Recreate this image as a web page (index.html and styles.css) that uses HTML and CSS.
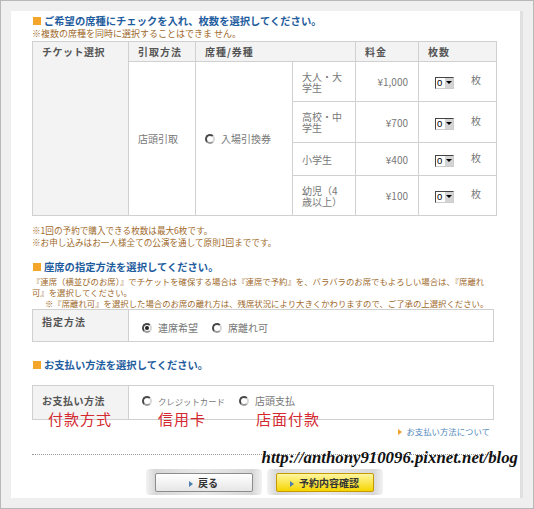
FILE: index.html
```html
<!DOCTYPE html>
<html lang="ja">
<head>
    <meta charset="UTF-8">
    <title>チケット選択</title>
    <link rel="stylesheet" href="styles.css">
</head>
<body>

<div class="frame">
    <div class="panel">

        <h2 class="sec-title"><span class="sq"></span>ご希望の席種にチェックを入れ、枚数を選択してください。</h2>
        <p class="note">※複数の席種を同時に選択することはできま せん。</p>

        <table class="tbl tickets">
            <colgroup>
                <col style="width:96px"><col style="width:67px"><col style="width:97px">
                <col style="width:63px"><col style="width:63px"><col style="width:78px">
            </colgroup>
            <tr class="head">
                <th class="label" rowspan="5">チケット選択</th>
                <th>引取方法</th>
                <th colspan="2">席種/券種</th>
                <th>料金</th>
                <th>枚数</th>
            </tr>
            <tr class="r1">
                <td rowspan="4">店頭引取</td>
                <td rowspan="4"><span class="radio"></span>入場引換券</td>
                <td class="kind">大人・大学生</td>
                <td class="price">¥1,000</td>
                <td class="qty"><span class="sel"><span class="val">0</span><span class="arrow"></span></span>枚</td>
            </tr>
            <tr class="r2">
                <td class="kind">高校・中学生</td>
                <td class="price">¥700</td>
                <td class="qty"><span class="sel"><span class="val">0</span><span class="arrow"></span></span>枚</td>
            </tr>
            <tr class="r3">
                <td class="kind">小学生</td>
                <td class="price">¥400</td>
                <td class="qty"><span class="sel"><span class="val">0</span><span class="arrow"></span></span>枚</td>
            </tr>
            <tr class="r4">
                <td class="kind">幼児（4歳以上）</td>
                <td class="price">¥100</td>
                <td class="qty"><span class="sel"><span class="val">0</span><span class="arrow"></span></span>枚</td>
            </tr>
        </table>

        <div class="note after">
            <p>※1回の予約で購入できる枚数は最大6枚です。</p>
            <p>※お申し込みはお一人様全ての公演を通して原則1回までです。</p>
        </div>

        <h2 class="sec-title sec2"><span class="sq"></span>座席の指定方法を選択してください。</h2>
        <p class="note small">『連席（横並びのお席）』でチケットを確保する場合は『連席で予約』を、バラバラのお席でもよろしい場合は、『席離れ<br>可』を選択してください。<br><span class="indent">※『席離れ可』を選択した場合のお席の離れ方は、残席状況により大きくかわりますので、ご了承の上選択ください。</span></p>

        <table class="tbl opt seat">
            <tr>
                <th class="label">指定方法</th>
                <td><span class="radio on"></span>連席希望<span class="radio gap"></span>席離れ可</td>
            </tr>
        </table>

        <h2 class="sec-title sec3"><span class="sq"></span>お支払い方法を選択してください。</h2>

        <div class="pay-wrap">
            <table class="tbl opt pay">
                <tr>
                    <th class="label">お支払い方法</th>
                    <td><span class="radio"></span><span class="narrow">クレジットカード</span><span class="radio gap"></span>店頭支払</td>
                </tr>
            </table>
            <span class="memo m1">付款方式</span>
            <span class="memo m2">信用卡</span>
            <span class="memo m3">店面付款</span>
        </div>

        <div class="pay-link"><span class="tri"></span>お支払い方法について</div>

        <div class="divider">
            <span class="watermark">http://anthony910096.pixnet.net/blog</span>
        </div>

        <div class="actions">
            <div class="btn-bg"><button class="btn back"><span class="tri blue"></span>戻る</button></div>
            <div class="btn-bg"><button class="btn next"><span class="tri blue"></span>予約内容確認</button></div>
        </div>

    </div>
</div>

</body>
</html>
```

FILE: styles.css
```css
body {
    margin: 0;
    font-family: "Noto Sans CJK JP", "Liberation Sans", sans-serif;
}
.frame {
    box-sizing: border-box;
    width: 534px;
    height: 509px;
    border: 1px solid #b8b8b8;
    background: #efefef;
    padding: 10px;
}
.panel {
    box-sizing: border-box;
    height: 487px;
    width: 512px;
    background: #fff;
    border-right: 3px solid #e0e0e0;
    padding: 3px 24px 0 21px;
}

.sec-title {
    margin: 0;
    height: 14px;
    line-height: 14px;
    font-size: 10.3px;
    font-weight: bold;
    color: #1f5d9e;
    display: flex;
    align-items: center;
}
.sq {
    width: 8px;
    height: 8px;
    background: #f4a52a;
    margin: 0 3px 0 1px;
}
.sec2 { margin-top: 13px; }
.sec3 { margin-top: 16px; }

.note {
    margin: 0;
    font-size: 9px;
    line-height: 11px;
    color: #a06a2c;
    white-space: nowrap;
}
.note p {
    margin: 0;
    font-size: 8.6px;
    height: 12px;
    line-height: 12px;
}
.note.after { margin-top: 8px; height: 23px; }
.note.small {
    margin-top: 2px;
    font-size: 8.4px;
}
.indent { padding-left: 13px; }

.tbl {
    border-collapse: collapse;
    table-layout: fixed;
    font-size: 10px;
    color: #777;
}
.tbl th, .tbl td {
    border: 1px solid #d0d0d0;
    padding: 0 9px;
    text-align: left;
    font-weight: normal;
}
.tbl th {
    background: #f3f3f3;
    color: #555;
    font-weight: bold;
    letter-spacing: 1px;
}
.tickets {
    width: 464px;
    margin-top: 2px;
}
.tickets .head { height: 20px; }
.tickets th.label { vertical-align: top; padding-top: 2px; letter-spacing: 0.5px; }
.tickets .r1 { height: 40px; }
.tickets .r2 { height: 41px; }
.tickets .r3 { height: 33px; }
.tickets .r4 { height: 40px; }
.tickets td { line-height: 11px; }
.tickets .price { text-align: right; padding-right: 10px; }
.tickets .qty { padding-left: 16px; }

.radio {
    display: inline-block;
    box-sizing: border-box;
    width: 10px;
    height: 10px;
    border-radius: 50%;
    border: 2px solid #4a4a4a;
    border-right-color: #d8d8d8;
    border-bottom-color: #9a9a9a;
    background: #fff;
    vertical-align: -1px;
    margin-right: 6px;
    position: relative;
}
.radio.on::after {
    content: "";
    position: absolute;
    left: 1px;
    top: 1px;
    width: 4px;
    height: 4px;
    border-radius: 50%;
    background: #222;
}
.radio.gap { margin-left: 14px; }

.sel {
    display: inline-flex;
    align-items: stretch;
    box-sizing: border-box;
    width: 19px;
    height: 12px;
    border: 1px solid #444;
    border-right-color: #ccc;
    border-bottom-color: #ccc;
    background: #fff;
    vertical-align: -2px;
    margin-right: 17px;
}
.sel .val {
    flex: 1;
    font-size: 9.5px;
    line-height: 10px;
    color: #000;
    font-family: "Liberation Sans", sans-serif;
    padding-left: 1px;
}
.sel .arrow {
    width: 8px;
    background: #d4d4d4;
    border-left: 1px solid #fff;
    position: relative;
}
.sel .arrow::after {
    content: "";
    position: absolute;
    left: 1px;
    top: 3px;
    border: 3px solid transparent;
    border-top: 3px solid #000;
    border-bottom: 0;
}

.opt {
    width: 462px;
}
.opt th.label { width: 77px; vertical-align: top; }
.seat { height: 33px; }
.seat th.label { padding-top: 4px; }
.seat td { padding-top: 4px; padding-left: 13px; }
.pay { height: 35px; }
.pay th.label { padding-top: 7px; letter-spacing: 0.5px; }
.pay td { padding-bottom: 5px; padding-left: 13px; }
.narrow { font-size: 8.4px; }

.pay-wrap {
    position: relative;
    margin-top: 13px;
}
.memo {
    position: absolute;
    top: 25px;
    font-size: 15px;
    line-height: 18px;
    letter-spacing: 1px;
    color: #d42a2f;
}
.m1 { left: 16px; }
.m2 { left: 126px; }
.m3 { left: 224px; }

.pay-link {
    margin-top: 6px;
    text-align: right;
    font-size: 8.4px;
    line-height: 11px;
    color: #4f86b8;
    padding-right: 6px;
}
.tri {
    display: inline-block;
    border: 3px solid transparent;
    border-left: 4px solid #f0a030;
    border-right: 0;
    margin-right: 5px;
    vertical-align: 0;
}
.tri.blue { border-left-color: #4a7fb0; }

.divider {
    position: relative;
    margin-top: 17px;
    border-top: 1px dotted #9a9a9a;
}
.watermark {
    position: absolute;
    right: -22px;
    top: -6px;
    font-family: "Liberation Serif", serif;
    font-style: italic;
    font-weight: bold;
    font-size: 16.8px;
    line-height: 18px;
    color: #111;
    white-space: nowrap;
}

.actions {
    display: flex;
    justify-content: center;
    gap: 5px;
    margin-top: 14px;
}
.btn-bg {
    padding: 4px 9px 3px;
    border-radius: 4px;
    background: linear-gradient(to right, #f2f2f2, #d8d8d8 8%, #e9e9e9 50%, #d8d8d8 92%, #f2f2f2);
}
.btn {
    display: block;
    width: 98px;
    height: 19px;
    padding: 0;
    font-family: "Noto Sans CJK JP", sans-serif;
    font-size: 10px;
    font-weight: bold;
    color: #333;
    border-radius: 2px;
    cursor: pointer;
}
.btn.back {
    background: linear-gradient(#ffffff, #e6e6e6);
    border: 1px solid #8c8c8c;
}
.btn.next {
    background: linear-gradient(#fff6a0, #f6d500);
    border: 1px solid #c49a00;
}
```
